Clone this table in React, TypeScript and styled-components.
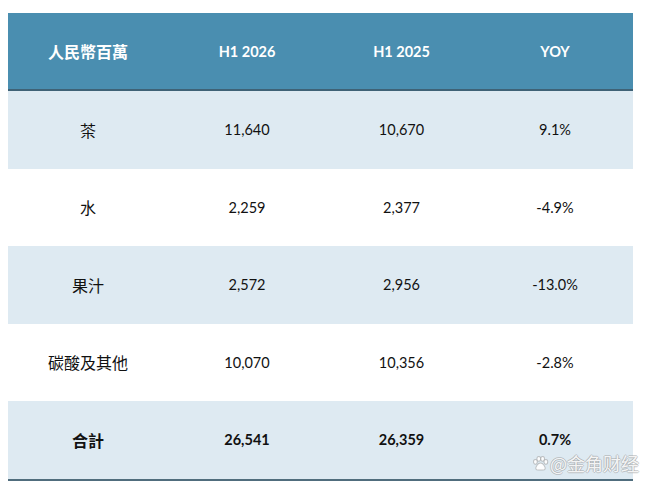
import * as React from "react"
import styled, { createGlobalStyle } from "styled-components"

const GlobalStyle = createGlobalStyle`
  html, body {
    margin: 0;
    padding: 0;
    background: #ffffff;
  }
  body {
    font-family: Lato, "Noto Sans CJK TC", sans-serif;
  }
`;

const Page = styled.main`
  position: relative;
  width: 650px;
  height: 485px;
  padding: 13px 0 0 8px;
  box-sizing: border-box;
  overflow: hidden;
`;

const Table = styled.section`
  width: 625px;
  border-bottom: 2px solid #506d7d;
`;

const COLS = "160px 158px 151px 156px";

const HeaderRow = styled.div`
  display: grid;
  grid-template-columns: ${COLS};
  height: 76px;
  background: #4a8eb0;
  border-bottom: 2px solid #3f6276;
`;

const HeadCell = styled.div<{ $cjk?: boolean }>`
  display: flex;
  align-items: center;
  justify-content: center;
  color: #ffffff;
  font-weight: 700;
  font-size: ${(p) => (p.$cjk ? "16px" : "14.5px")};
  font-family: ${(p) => (p.$cjk ? '"Noto Sans CJK TC", sans-serif' : 'Lato, sans-serif')};
`;

const Row = styled.div<{ $shade?: boolean }>`
  display: grid;
  grid-template-columns: ${COLS};
  height: 77.5px;
  background: ${(p) => (p.$shade ? "#deeaf2" : "#ffffff")};
`;

const Cell = styled.div<{ $cjk?: boolean; $bold?: boolean }>`
  display: flex;
  align-items: center;
  justify-content: center;
  color: #111111;
  font-weight: ${(p) => (p.$bold ? 700 : 400)};
  font-size: ${(p) => (p.$cjk ? "16px" : "14.5px")};
  font-family: ${(p) => (p.$cjk ? '"Noto Sans CJK TC", sans-serif' : 'Lato, sans-serif')};
`;

const Watermark = styled.div`
  position: absolute;
  right: 11px;
  bottom: 12px;
  display: flex;
  align-items: center;
  gap: 1px;
  font-family: "Noto Sans CJK SC", sans-serif;
  font-size: 18px;
  line-height: 20px;
  color: rgba(255, 255, 255, 0.9);
  text-shadow:
    -1px 0 0 rgba(150, 150, 150, 0.45),
    1px 0 0 rgba(150, 150, 150, 0.45),
    0 -1px 0 rgba(150, 150, 150, 0.45),
    0 1px 0 rgba(150, 150, 150, 0.45);
`;

const Paw = () => (
  <svg width="17" height="17" viewBox="0 0 20 20">
    <g fill="rgba(255,255,255,0.9)" stroke="rgba(150,150,150,0.55)" strokeWidth="1.2">
      <ellipse cx="4" cy="8" rx="2.2" ry="2.8" />
      <ellipse cx="8" cy="4.5" rx="2.2" ry="2.8" />
      <ellipse cx="12.5" cy="4.5" rx="2.2" ry="2.8" />
      <ellipse cx="16.3" cy="8" rx="2.2" ry="2.8" />
      <path d="M10 9.5c-3 0-6 4.5-5.5 6.8.5 2 3 1.4 5.5 1.4s5 .6 5.5-1.4C16 14 13 9.5 10 9.5z" />
    </g>
  </svg>
);

const rows = [
  { name: "茶", a: "11,640", b: "10,670", yoy: "9.1%" },
  { name: "水", a: "2,259", b: "2,377", yoy: "-4.9%" },
  { name: "果汁", a: "2,572", b: "2,956", yoy: "-13.0%" },
  { name: "碳酸及其他", a: "10,070", b: "10,356", yoy: "-2.8%" },
];

export default function App() {
  return (
    <>
      <GlobalStyle />
      <Page>
        <Table>
          <HeaderRow>
            <HeadCell $cjk>人民幣百萬</HeadCell>
            <HeadCell>H1 2026</HeadCell>
            <HeadCell>H1 2025</HeadCell>
            <HeadCell>YOY</HeadCell>
          </HeaderRow>
          {rows.map((r, i) => (
            <Row key={r.name} $shade={i % 2 === 0}>
              <Cell $cjk>{r.name}</Cell>
              <Cell>{r.a}</Cell>
              <Cell>{r.b}</Cell>
              <Cell>{r.yoy}</Cell>
            </Row>
          ))}
          <Row $shade>
            <Cell $cjk $bold>合計</Cell>
            <Cell $bold>26,541</Cell>
            <Cell $bold>26,359</Cell>
            <Cell $bold>0.7%</Cell>
          </Row>
        </Table>
        <Watermark>
          <Paw />
          <span>@金角财经</span>
        </Watermark>
      </Page>
    </>
  )
}
